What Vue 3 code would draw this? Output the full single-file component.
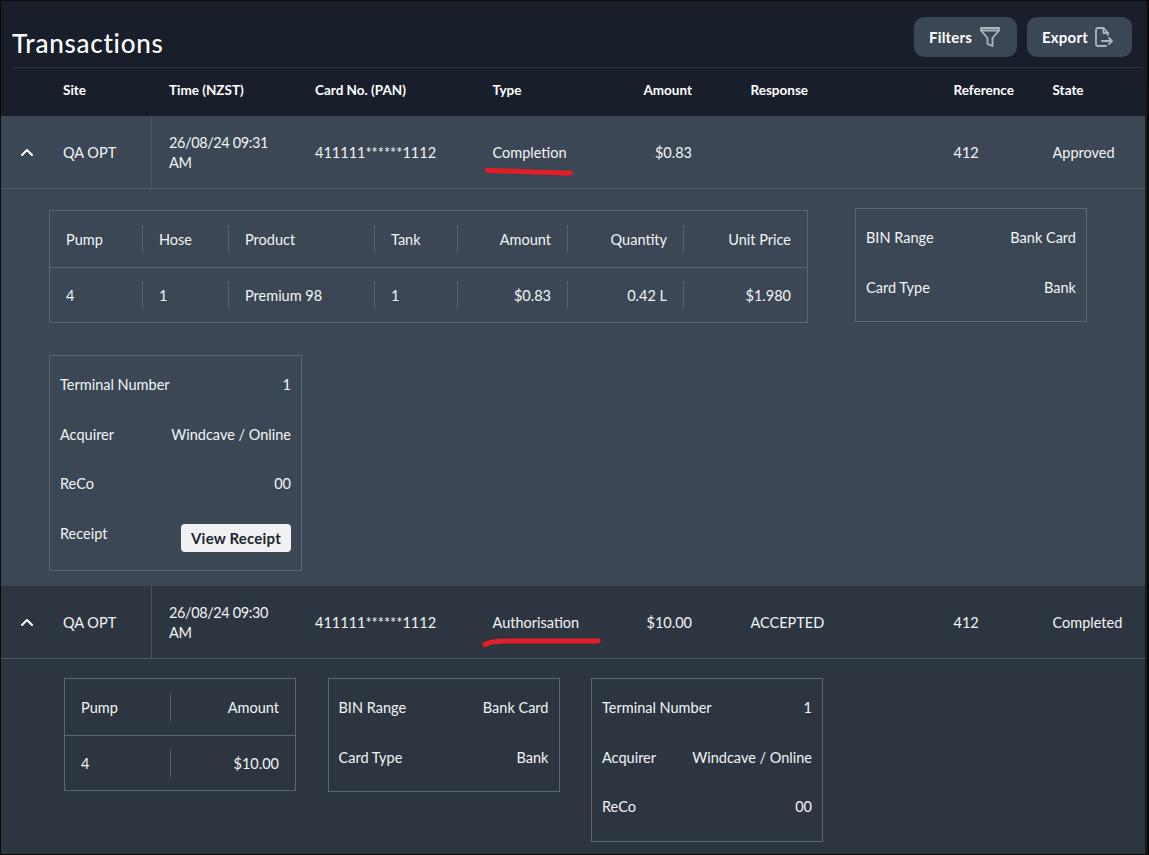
<script setup>
const head = ['', 'Site', 'Time (NZST)', 'Card No. (PAN)', 'Type', 'Amount', 'Response', 'Reference', 'State']
const cols = ['Pump', 'Hose', 'Product', 'Tank', 'Amount', 'Quantity', 'Unit Price']
const vals = ['4', '1', 'Premium 98', '1', '$0.83', '0.42 L', '$1.980']
const binRows = [['BIN Range', 'Bank Card'], ['Card Type', 'Bank']]
const termRows = [['Terminal Number', '1'], ['Acquirer', 'Windcave / Online'], ['ReCo', '00']]
</script>

<template>
  <div class="page">
    <div class="track"></div>
    <header class="top">
      <h1>Transactions</h1>
      <div class="actions">
        <button class="btn filters">Filters
          <svg width="20" height="20" viewBox="0 0 20 20" fill="none" stroke="#aeb4bb" stroke-width="1.8" stroke-linejoin="round" stroke-linecap="round">
            <path d="M1 1h18v2.5L12.5 11v8l-5-2v-6L1 3.5Z" />
            <path d="M1.5 3.5h17" />
          </svg>
        </button>
        <button class="btn export">Export
          <svg width="18" height="20" viewBox="0 0 18 20" fill="none" stroke="#aeb4bb" stroke-width="1.8" stroke-linejoin="round" stroke-linecap="round">
            <path d="M13 8V6L8.5 1H3a2 2 0 0 0-2 2v14a2 2 0 0 0 2 2h8" />
            <path d="M8.5 1v5H13" />
            <path d="M7 14h10M14 11l3 3-3 3" />
          </svg>
        </button>
      </div>
    </header>

    <div class="grid headrow">
      <div v-for="(h, i) in head" :key="i">{{ h }}</div>
    </div>

    <section class="light">
      <div class="grid row">
        <div class="chev"><svg width="14" height="9" viewBox="0 0 14 9" fill="none" stroke="#fff" stroke-width="2" stroke-linecap="round" stroke-linejoin="round"><path d="M2 7l5-5 5 5" /></svg></div>
        <div class="site">QA OPT</div>
        <div class="date">26/08/24 09:31<br />AM</div>
        <div>411111******1112</div>
        <div class="typecell">Completion
          <svg class="scribble s1" width="92" height="12" viewBox="0 0 92 12" fill="none" stroke="#e41e26" stroke-width="5" stroke-linecap="round"><path d="M4.5 4.5C30 5 60 6.5 87.5 7" /></svg>
        </div>
        <div>$0.83</div>
        <div></div>
        <div>412</div>
        <div>Approved</div>
      </div>
      <div class="detail d1">
        <div class="line1">
          <table class="tbl wide">
            <tbody>
              <tr class="h"><td v-for="(c, i) in cols" :key="c" :class="'c' + i"><span>{{ c }}</span></td></tr>
              <tr><td v-for="(v, i) in vals" :key="i" :class="'c' + i"><span>{{ v }}</span></td></tr>
            </tbody>
          </table>
          <div class="panel bin">
            <div v-for="r in binRows" :key="r[0]" class="pr"><span>{{ r[0] }}</span><span>{{ r[1] }}</span></div>
          </div>
        </div>
        <div class="panel term">
          <div v-for="r in termRows" :key="r[0]" class="pr"><span>{{ r[0] }}</span><span>{{ r[1] }}</span></div>
          <div class="pr receipt"><span>Receipt</span><button class="view">View Receipt</button></div>
        </div>
      </div>
    </section>

    <section class="dark">
      <div class="grid row">
        <div class="chev"><svg width="14" height="9" viewBox="0 0 14 9" fill="none" stroke="#fff" stroke-width="2" stroke-linecap="round" stroke-linejoin="round"><path d="M2 7l5-5 5 5" /></svg></div>
        <div class="site">QA OPT</div>
        <div class="date">26/08/24 09:30<br />AM</div>
        <div>411111******1112</div>
        <div class="typecell">Authorisation
          <svg class="scribble s2" width="124" height="13" viewBox="0 0 124 13" fill="none" stroke="#e41e26" stroke-width="5" stroke-linecap="round"><path d="M5 9.5C10 6.5 17 6 26 6H118" /></svg>
        </div>
        <div>$10.00</div>
        <div>ACCEPTED</div>
        <div>412</div>
        <div>Completed</div>
      </div>
      <div class="detail d2">
        <table class="tbl small">
          <tbody>
            <tr class="h"><td class="p"><span>Pump</span></td><td class="a"><span>Amount</span></td></tr>
            <tr><td class="p"><span>4</span></td><td class="a"><span>$10.00</span></td></tr>
          </tbody>
        </table>
        <div class="panel bin">
          <div v-for="r in binRows" :key="r[0]" class="pr"><span>{{ r[0] }}</span><span>{{ r[1] }}</span></div>
        </div>
        <div class="panel bin">
          <div v-for="r in termRows" :key="r[0]" class="pr"><span>{{ r[0] }}</span><span>{{ r[1] }}</span></div>
        </div>
      </div>
    </section>
  </div>
</template>

<style>
html, body { margin: 0; background: #000; }
</style>

<style scoped>
.page {
  position: relative;
  box-sizing: border-box;
  width: 1149px;
  height: 855px;
  overflow: hidden;
  border-style: solid;
  border-color: #0a0a0a;
  border-width: 1px 2px 1px 1px;
  background: #181f2b;
  color: #f2f4f6;
  font: 14.5px/20px Lato, "Noto Sans", sans-serif;
}
.track {
  position: absolute;
  top: 83px;
  right: 0;
  bottom: 0;
  width: 2px;
  background: #1b1b1b;
  z-index: 2;
}
.top {
  height: 66px;
  margin: 0 5px 0 11px;
  border-bottom: 1px solid #2f3742;
  display: flex;
  justify-content: space-between;
}
h1 {
  margin: 26px 0 0;
  font-size: 26px;
  line-height: 32px;
  font-weight: 500;
  letter-spacing: 0.75px;
  color: #fff;
}
.actions { display: flex; gap: 10px; padding: 16px 10px 0 0; }
.btn {
  height: 40px;
  border: 0;
  border-radius: 10px;
  background: #3b4754;
  color: #fff;
  font: 700 15px Lato, sans-serif;
  letter-spacing: 0.2px;
  display: flex;
  align-items: center;
  padding: 0 0 1px 15px;
  gap: 7px;
}
.filters { width: 103px; gap: 8px; }
.export { width: 105px; }
.grid {
  display: grid;
  grid-template-columns: 62px 106px 146px 177.5px 100px 99.5px 261.5px 99px 1fr;
  align-items: center;
}
.headrow { height: 48px; padding-bottom: 4px; box-sizing: border-box; font-weight: 700; font-size: 13.5px; color: #fff; }
.grid > div:nth-child(6) { text-align: right; }
.grid > div:nth-child(7) { padding-left: 58.5px; }
.row { height: 73px; box-sizing: border-box; border-bottom: 1px solid #4f5a66; padding-top: 1px; }
.chev { display: flex; padding-left: 19px; }
.site { align-self: stretch; margin-top: -1px; display: flex; align-items: center; padding-top: 1px; border-right: 1px solid #4a5561; margin-right: 17px; }
.date { letter-spacing: -0.4px; }
.typecell { position: relative; }
.scribble { position: absolute; }
.s1 { left: -10px; top: 23px; }
.s2 { left: -13px; top: 22px; }
.light { background: #3b4754; height: 470px; }
.dark { background: #2d3640; height: 268px; }
.d1 { padding: 19px 0 0 48px; }
.line1 { display: flex; align-items: flex-start; gap: 47px; margin-bottom: 32px; }
.d2 { padding: 19px 0 0 63px; display: flex; align-items: flex-start; gap: 31.5px; }
.tbl {
  border-collapse: collapse;
  border: 1px solid #5c6772;
  margin-top: 2px;
}
.d2 .tbl { margin-top: 0; }
.tbl tr.h td { border-bottom: 1px solid #5c6772; height: 56px; }
.tbl td { padding: 0; height: 54px; }
.tbl td span {
  box-sizing: border-box;
  display: flex;
  align-items: center;
  height: 28px;
  padding: 1px 16px 0;
  border-left: 1px solid #56616c;
}
.tbl td:first-child span { border-left: 0; }
.c0 { width: 92px; }
.c1 { width: 86px; }
.c2 { width: 146px; }
.c3 { width: 83px; }
.c4 { width: 110px; }
.c5 { width: 116px; }
.c6 { width: 124px; }
.c1 span { padding-left: 15px; }
.c4 span, .c5 span, .c6 span, .a span { justify-content: flex-end; }
.p { width: 105px; }
.a { width: 125px; }
.panel {
  box-sizing: border-box;
  width: 232px;
  border: 1px solid #5c6772;
  padding: 4px 10px 9px;
}
.term { width: 253px; padding-bottom: 12px; }
.pr { height: 49.5px; display: flex; justify-content: space-between; align-items: center; }
.pr > span { padding-top: 1px; }
.view {
  height: 28px;
  width: 110px;
  border: 0;
  border-radius: 4px;
  background: #f1f1f4;
  color: #1d2430;
  font: 700 15px Lato, sans-serif;
  letter-spacing: 0.2px;
  padding: 0;
  margin-top: 10px;
}
</style>
